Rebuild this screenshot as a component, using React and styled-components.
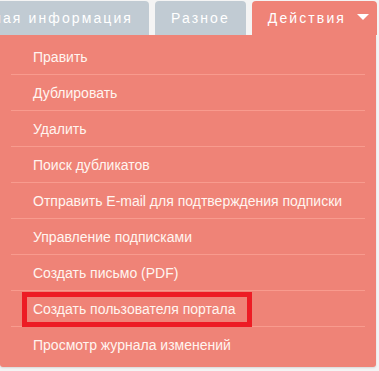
import React from "react";
import styled, { createGlobalStyle } from "styled-components";

const Global = createGlobalStyle`
  html, body { margin: 0; padding: 0; background: #f4f4f4; }
  body { font-family: "Liberation Sans", Arial, sans-serif; }
`;

const Page = styled.div`
  width: 379px;
  height: 371px;
  overflow: hidden;
  background: #f4f4f4;
`;

const TabBar = styled.div`
  display: flex;
  justify-content: flex-end;
  gap: 6px;
  padding: 1px 2px 0 0;
  overflow: hidden;
`;

const Tab = styled.div`
  flex-shrink: 0;
  height: 34px;
  display: flex;
  align-items: center;
  gap: 11px;
  padding: 0 ${(p) => (p.$active ? "8px" : "16px")} 0 16px;
  box-sizing: border-box;
  border-radius: 4px 4px 0 0;
  background: ${(p) => (p.$active ? "#ef8377" : "#c1cbd3")};
  color: #ffffff;
  font-size: 14px;
  letter-spacing: 2.1px;
  white-space: nowrap;
`;

const Caret = styled.span`
  width: 0;
  height: 0;
  border-left: 6px solid transparent;
  border-right: 6px solid transparent;
  border-top: 6px solid #ffffff;
  margin-top: -2px;
`;

const Menu = styled.ul`
  list-style: none;
  margin: 0;
  width: 376px;
  box-sizing: border-box;
  padding: 4px 11px 5px 11px;
  background: #ef8377;
  border-radius: 0 0 3px 3px;
  box-shadow: 0 1px 2px rgba(0, 0, 0, 0.12);
`;

const Item = styled.li`
  position: relative;
  height: 35px;
  display: flex;
  align-items: center;
  padding-left: 22px;
  color: #fff5f0;
  font-size: 14px;
  border-bottom: 1px solid #f89b8e;
  &:last-child { border-bottom: none; }
`;

const Highlight = styled.span`
  position: absolute;
  left: 11px;
  top: 1px;
  width: 230px;
  height: 35px;
  box-sizing: border-box;
  border: 5px solid #ed1c24;
  pointer-events: none;
`;

const items = [
  "Править",
  "Дублировать",
  "Удалить",
  "Поиск дубликатов",
  "Отправить E-mail для подтверждения подписки",
  "Управление подписками",
  "Создать письмо (PDF)",
  "Создать пользователя портала",
  "Просмотр журнала изменений",
];

export default function App() {
  return (
    <Page>
      <Global />
      <TabBar>
        <Tab>Основная информация</Tab>
        <Tab>Разное</Tab>
        <Tab $active>
          Действия
          <Caret />
        </Tab>
      </TabBar>
      <Menu>
        {items.map((t, i) => (
          <Item key={t}>
            {t}
            {i === 7 && <Highlight />}
          </Item>
        ))}
      </Menu>
    </Page>
  );
}
